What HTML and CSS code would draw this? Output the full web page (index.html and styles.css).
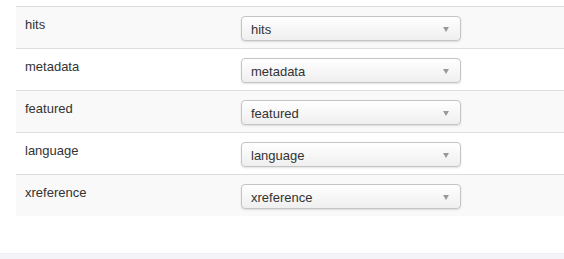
FILE: index.html
```html
<!DOCTYPE html>
<html>
<head>
    <meta name="viewport" content="width=device-width, initial-scale=1.0">
    <title>Field mapping</title>
    <link rel="stylesheet" href="styles.css">
</head>
<body>
    <div class="mapping-page">
        <table class="mapping-table">
            <tr class="odd">
                <td class="field-name">hits</td>
                <td class="field-choice"><div class="fake-select">hits<span class="caret"></span></div></td>
            </tr>
            <tr>
                <td class="field-name">metadata</td>
                <td class="field-choice"><div class="fake-select">metadata<span class="caret"></span></div></td>
            </tr>
            <tr class="odd">
                <td class="field-name">featured</td>
                <td class="field-choice"><div class="fake-select">featured<span class="caret"></span></div></td>
            </tr>
            <tr>
                <td class="field-name">language</td>
                <td class="field-choice"><div class="fake-select">language<span class="caret"></span></div></td>
            </tr>
            <tr class="odd">
                <td class="field-name">xreference</td>
                <td class="field-choice"><div class="fake-select">xreference<span class="caret"></span></div></td>
            </tr>
        </table>
    </div>
    <div class="footer-strip"></div>
</body>
</html>
```

FILE: styles.css
```css
body {
    font-family: "Liberation Sans", Arial, sans-serif;
    font-size: 13px;
    line-height: 20px;
    color: #333333;
    margin: 0;
    padding: 0;
    background-color: #ffffff;
    overflow: hidden;
}

.mapping-page {
    padding: 6px 0 0 16px;
    height: 247px;
}

.mapping-table {
    width: 100%;
    border-collapse: collapse;
    border-spacing: 0;
}

.mapping-table td {
    border-top: 1px solid #dddddd;
    padding: 8px 8px 8px 9px;
    vertical-align: top;
}

.mapping-table td.field-choice {
    padding: 9px 8px 7px 8px;
}

.mapping-table tr.odd td {
    background-color: #f9f9f9;
}

.mapping-table td.field-name {
    width: 200px;
}

.fake-select {
    position: relative;
    width: 209px;
    height: 23px;
    padding-left: 9px;
    line-height: 25px;
    border: 1px solid #c4c4c4;
    border-radius: 4px;
    background: linear-gradient(#ffffff, #efefef);
    box-shadow: 0 1px 2px rgba(0, 0, 0, 0.12);
}

.caret {
    position: absolute;
    right: 11px;
    top: 10px;
    border-left: 3px solid transparent;
    border-right: 3px solid transparent;
    border-top: 5px solid #999999;
}

.footer-strip {
    height: 6px;
    background-color: #f3f3f8;
    border-top: 1px solid #ededf2;
}
```
